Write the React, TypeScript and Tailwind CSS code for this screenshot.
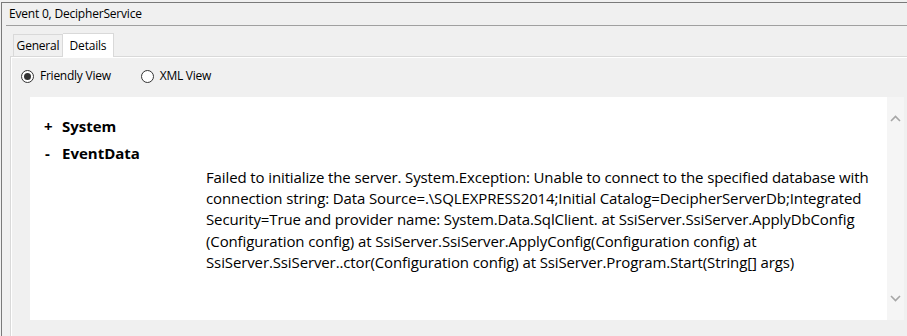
import React from "react";

const lines = [
  "Failed to initialize the server. System.Exception: Unable to connect to the specified database with",
  "connection string: Data Source=.\\SQLEXPRESS2014;Initial Catalog=DecipherServerDb;Integrated",
  "Security=True and provider name: System.Data.SqlClient. at SsiServer.SsiServer.ApplyDbConfig",
  "(Configuration config) at SsiServer.SsiServer.ApplyConfig(Configuration config) at",
  "SsiServer.SsiServer..ctor(Configuration config) at SsiServer.Program.Start(String[] args)",
];

function Radio({ checked }: { checked?: boolean }) {
  return (
    <span className="w-[13px] h-[13px] rounded-full border border-[#333333] bg-white flex items-center justify-center">
      {checked && <span className="w-[7px] h-[7px] rounded-full bg-[#333333]" />}
    </span>
  );
}

export default function App() {
  return (
    <div
      className="w-[907px] h-[336px] bg-[#f0f0f0] overflow-hidden text-black"
      style={{ fontFamily: '"Open Sans", "Noto Sans", sans-serif' }}
    >
      <div className="mt-[2px] ml-[1px] h-[334px] border-t border-l border-[#7a7a7a] flex flex-col">
        {/* title */}
        <div className="h-[22px] flex items-center pl-[7px] text-[12px] tracking-[-0.2px]">
          Event 0, DecipherService
        </div>
        <div className="ml-[4px] h-px bg-[#a0a0a0]" />
        {/* tabs */}
        <div className="flex items-end h-[30px] pl-[11px] text-[12px] tracking-[-0.2px]">
          <div className="h-[22px] w-[50px] border border-b-0 border-[#d9d9d9] flex items-center justify-center bg-[#f0f0f0]">
            General
          </div>
          <div className="h-[24px] w-[51px] border border-b-0 border-l-0 border-[#d9d9d9] bg-white flex items-center justify-center -mb-px relative z-10">
            Details
          </div>
        </div>
        <div className="ml-[8px] flex-1 border-t border-l border-[#d9d9d9] flex flex-col">
          <div className="flex-1 border-t border-l border-white flex flex-col">
            {/* radios */}
            <div className="h-[39px] pb-[3px] flex items-center pl-[9px] text-[12px] tracking-[-0.25px]">
              <Radio checked />
              <span className="ml-[6px]">Friendly View</span>
              <span className="ml-[30px]">
                <Radio />
              </span>
              <span className="ml-[6px]">XML View</span>
            </div>
            {/* content */}
            <div className="ml-[18px] h-[223px] w-[874px] flex">
              <div className="flex-1 bg-white pt-[16px] text-[15px] leading-[21.2px]">
                <div className="flex font-bold text-[15px] h-[27px] items-center">
                  <span className="w-[32px] pl-[14px]">+</span>
                  <span>System</span>
                </div>
                <div className="flex font-bold text-[15px] h-[27px] items-center">
                  <span className="w-[32px] pl-[15px]">-</span>
                  <span>EventData</span>
                </div>
                <div className="pl-[176px] tracking-[-0.12px]">
                  {lines.map((l, i) => (
                    <div key={i} className="whitespace-nowrap">
                      {l}
                    </div>
                  ))}
                </div>
              </div>
              <div className="w-[17px] bg-[#f5f5f5] flex flex-col justify-between items-center py-[18px]">
                <svg width="11" height="7" viewBox="0 0 11 7">
                  <path d="M1 6 L5.5 1.5 L10 6" fill="none" stroke="#a6a6a6" strokeWidth="1.6" />
                </svg>
                <svg width="11" height="7" viewBox="0 0 11 7">
                  <path d="M1 1 L5.5 5.5 L10 1" fill="none" stroke="#a6a6a6" strokeWidth="1.6" />
                </svg>
              </div>
            </div>
          </div>
        </div>
      </div>
    </div>
  );
}
